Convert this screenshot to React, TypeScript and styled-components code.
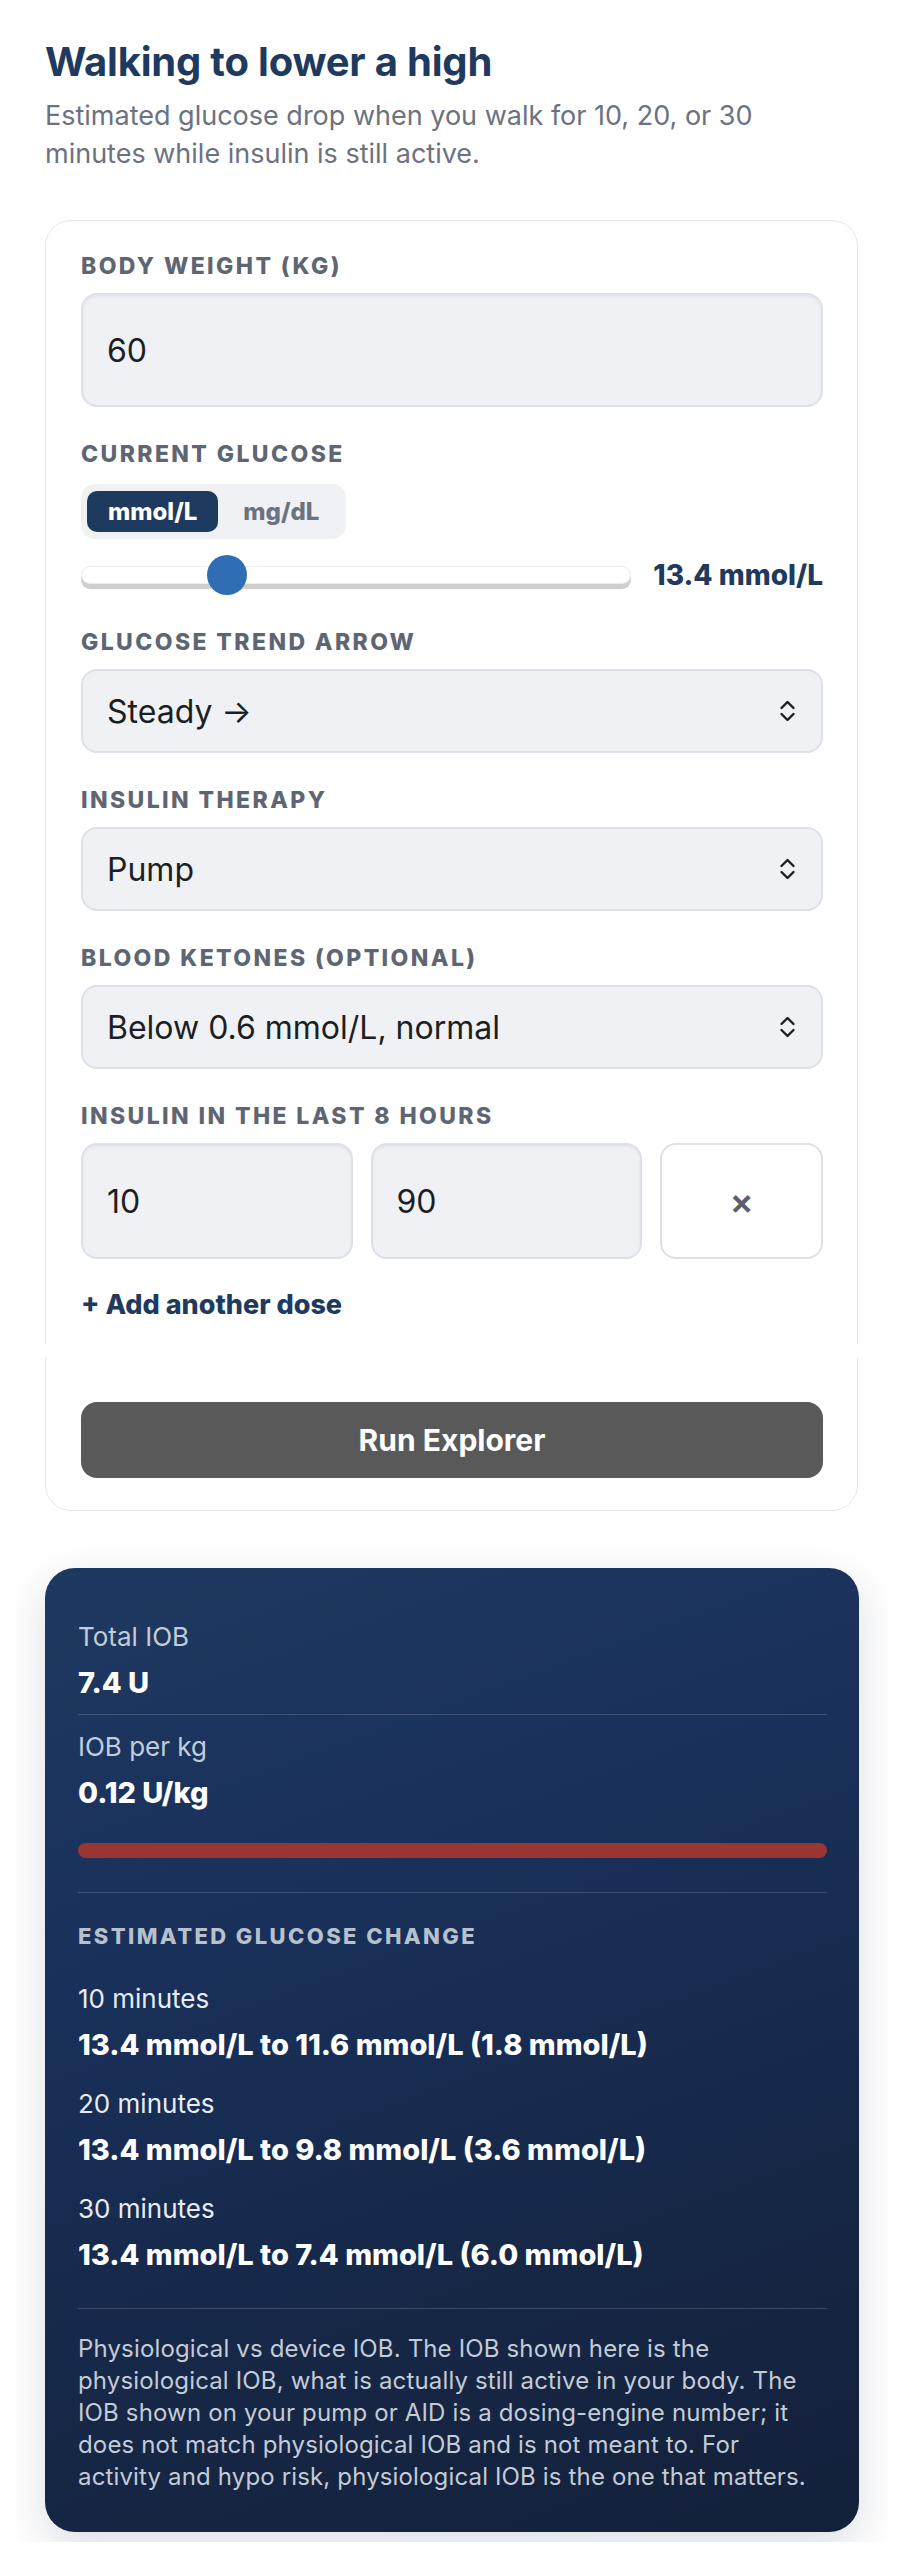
import { FC } from "react";
import styled, { createGlobalStyle } from "styled-components";

const GlobalStyle = createGlobalStyle`
  * {
    box-sizing: border-box;
  }
  body {
    margin: 0;
    background: #ffffff;
    font-family: "Inter", "Liberation Sans", sans-serif;
    -webkit-font-smoothing: antialiased;
  }
`;

const ChevronUpDown: FC = () => (
  <svg width="17" height="24" viewBox="0 0 17 24" fill="none">
    <path
      d="M2.5 9 L8.5 3 L14.5 9 M2.5 15 L8.5 21 L14.5 15"
      stroke="#1c1f24"
      strokeWidth="2.4"
      strokeLinecap="round"
      strokeLinejoin="round"
    />
  </svg>
);

interface SelectFieldProps {
  label: string;
  value: string;
  options: string[];
}

const SelectField: FC<SelectFieldProps> = ({ label, value, options }) => (
  <Field>
    <Label>{label}</Label>
    <SelectWrap>
      <Select defaultValue={value}>
        {options.map((o) => (
          <option key={o}>{o}</option>
        ))}
      </Select>
      <SelectIcon>
        <ChevronUpDown />
      </SelectIcon>
    </SelectWrap>
  </Field>
);

const results = [
  { minutes: "10 minutes", text: "13.4 mmol/L to 11.6 mmol/L (1.8 mmol/L)" },
  { minutes: "20 minutes", text: "13.4 mmol/L to 9.8 mmol/L (3.6 mmol/L)" },
  { minutes: "30 minutes", text: "13.4 mmol/L to 7.4 mmol/L (6.0 mmol/L)" },
];

const App: FC = () => {
  return (
    <>
      <GlobalStyle />
      <Page>
        <Title>Walking to lower a high</Title>
        <Subtitle>
          Estimated glucose drop when you walk for 10, 20, or 30 minutes while
          insulin is still active.
        </Subtitle>

        <Card>
          <Field>
            <Label>Body weight (kg)</Label>
            <TextInput type="text" defaultValue="60" $tall />
          </Field>

          <Field>
            <Label>Current glucose</Label>
            <Toggle>
              <ToggleOption $active>mmol/L</ToggleOption>
              <ToggleOption>mg/dL</ToggleOption>
            </Toggle>
            <SliderRow>
              <Range type="range" min={2} max={48.5} step={0.1} defaultValue={13.4} />
              <SliderValue>13.4 mmol/L</SliderValue>
            </SliderRow>
          </Field>

          <SelectField
            label="Glucose trend arrow"
            value="Steady →"
            options={["Rising fast ↑↑", "Rising ↗", "Steady →", "Falling ↘", "Falling fast ↓↓"]}
          />
          <SelectField
            label="Insulin therapy"
            value="Pump"
            options={["Pump", "Injections"]}
          />
          <SelectField
            label="Blood ketones (optional)"
            value="Below 0.6 mmol/L, normal"
            options={["Below 0.6 mmol/L, normal", "0.6 to 1.5 mmol/L", "Above 1.5 mmol/L"]}
          />

          <Field>
            <Label>Insulin in the last 8 hours</Label>
            <DoseRow>
              <TextInput type="text" defaultValue="10" />
              <TextInput type="text" defaultValue="90" />
              <RemoveButton aria-label="Remove dose">×</RemoveButton>
            </DoseRow>
          </Field>

          <AddDose>+ Add another dose</AddDose>

          <ActionBar>
            <RunButton>Run Explorer</RunButton>
          </ActionBar>
        </Card>

        <ResultSection>
          <ResultPanel>
            <MetricLabel>Total IOB</MetricLabel>
            <MetricValue>7.4 U</MetricValue>
            <Divider $top={16} $bottom={17} />
            <MetricLabel>IOB per kg</MetricLabel>
            <MetricValue>0.12 U/kg</MetricValue>
            <RiskBar />
            <Divider $top={34} $bottom={31} />
            <PanelHeading>Estimated glucose change</PanelHeading>
            <ChangeList>
              {results.map((r) => (
                <ChangeItem key={r.minutes}>
                  <MetricLabel $light>{r.minutes}</MetricLabel>
                  <MetricValue>{r.text}</MetricValue>
                </ChangeItem>
              ))}
            </ChangeList>
            <Divider $top={38} $bottom={24} />
            <Note>
              Physiological vs device IOB. The IOB shown here is the
              physiological IOB, what is actually still active in your body. The
              IOB shown on your pump or AID is a dosing-engine number; it does
              not match physiological IOB and is not meant to. For activity and
              hypo risk, physiological IOB is the one that matters.
            </Note>
          </ResultPanel>
        </ResultSection>
      </Page>
    </>
  );
};

const Page = styled.main`
  width: 813px;
  margin-left: 45px;
  padding-top: 40px;
  padding-bottom: 17px;
`;

const Title = styled.h1`
  margin: 0;
  font-size: 40px;
  line-height: 43px;
  font-weight: 700;
  color: #1f3a5f;
  letter-spacing: -0.2px;
`;

const Subtitle = styled.p`
  margin: 14px 0 0;
  font-size: 27px;
  line-height: 38px;
  color: #6b7280;
`;

const Card = styled.section`
  margin-top: 47px;
  background: #ffffff;
  border: 1px solid #e4e7eb;
  border-radius: 26px;
  padding: 33px 34px 32px 35px;
  display: flex;
  flex-direction: column;
  gap: 35px;
`;

const Field = styled.div`
  display: flex;
  flex-direction: column;
  gap: 15px;
`;

const Label = styled.label`
  font-size: 23px;
  line-height: 24px;
  font-weight: 800;
  letter-spacing: 2.4px;
  text-transform: uppercase;
  color: #5f6673;
`;

const TextInput = styled.input<{ $tall?: boolean }>`
  width: 100%;
  height: ${({ $tall }) => ($tall ? "114px" : "116px")};
  padding: 0 24px;
  background: #eff1f5;
  border: 2px solid #dde1e7;
  border-radius: 16px;
  box-shadow: inset 0 2px 3px rgba(15, 23, 42, 0.05);
  font-family: inherit;
  font-size: 32px;
  color: #1b1f24;
  outline: none;
`;

const Toggle = styled.div`
  display: inline-flex;
  align-self: flex-start;
  gap: 4px;
  margin-top: 3px;
  padding: 7px 6px;
  background: #eff1f5;
  border-radius: 14px;
`;

const ToggleOption = styled.button<{ $active?: boolean }>`
  height: 41px;
  padding: 0 21px;
  border: none;
  border-radius: 10px;
  background: ${({ $active }) => ($active ? "#1f3a5f" : "transparent")};
  color: ${({ $active }) => ($active ? "#ffffff" : "#6b7280")};
  font-family: inherit;
  font-size: 24px;
  font-weight: 800;
  cursor: pointer;
`;

const SliderRow = styled.div`
  display: flex;
  align-items: center;
  gap: 22px;
  margin-top: 1px;
  height: 40px;
`;

const Range = styled.input`
  flex: 1;
  min-width: 0;
  height: 40px;
  margin: 0;
  background: transparent;
  -webkit-appearance: none;
  appearance: none;

  &::-webkit-slider-runnable-track {
    height: 18px;
    background: #ffffff;
    border: 1px solid #ececec;
    border-radius: 9px;
    box-shadow: 0 5px 0 #cfcfcf;
  }

  &::-webkit-slider-thumb {
    -webkit-appearance: none;
    width: 40px;
    height: 40px;
    margin-top: -12px;
    border-radius: 50%;
    background: #2f6db4;
    border: none;
  }
`;

const SliderValue = styled.span`
  font-size: 28px;
  font-weight: 800;
  color: #1f3a5f;
  white-space: nowrap;
`;

const SelectWrap = styled.div`
  position: relative;
`;

const Select = styled.select`
  width: 100%;
  height: 84px;
  padding: 0 60px 0 24px;
  background: #eff1f5;
  border: 2px solid #dde1e7;
  border-radius: 16px;
  font-family: inherit;
  font-size: 32px;
  color: #1b1f24;
  -webkit-appearance: none;
  appearance: none;
  outline: none;
`;

const SelectIcon = styled.span`
  position: absolute;
  right: 27px;
  top: 50%;
  transform: translateY(-50%);
  display: flex;
  pointer-events: none;
`;

const DoseRow = styled.div`
  display: grid;
  grid-template-columns: 1fr 1fr 163px;
  gap: 18px;
`;

const RemoveButton = styled.button`
  height: 116px;
  background: #ffffff;
  border: 2px solid #dde1e7;
  border-radius: 16px;
  font-family: inherit;
  font-size: 36px;
  font-weight: 600;
  color: #59606b;
  cursor: pointer;
`;

const AddDose = styled.button`
  align-self: flex-start;
  margin-top: -5px;
  padding: 0;
  border: none;
  background: none;
  font-family: inherit;
  font-size: 27px;
  line-height: 31px;
  font-weight: 800;
  color: #1f3a5f;
  cursor: pointer;
`;

const ActionBar = styled.div`
  position: relative;
  margin-top: -11px;
  padding-top: 58px;

  &::before {
    content: "";
    position: absolute;
    top: 0;
    left: -40px;
    right: -40px;
    height: 13px;
    background: #ffffff;
  }
`;

const RunButton = styled.button`
  width: 100%;
  height: 76px;
  border: none;
  border-radius: 16px;
  background: #595959;
  color: #ffffff;
  font-family: inherit;
  font-size: 30px;
  font-weight: 700;
  cursor: pointer;
`;

const ResultSection = styled.div`
  margin: 17px -30px 0 -29px;
  padding: 40px 29px 10px 29px;
  overflow: hidden;
`;

const ResultPanel = styled.section`
  border-radius: 30px;
  padding: 54px 32px 39px 33px;
  background: linear-gradient(160deg, #1e3961 0%, #19305a 35%, #162746 70%, #132039 100%);
  box-shadow: 0 14px 44px rgba(30, 41, 70, 0.16);
  color: #ffffff;
`;

const MetricLabel = styled.div<{ $light?: boolean }>`
  font-size: 26px;
  line-height: 29px;
  color: ${({ $light }) => ($light ? "#e8ecf2" : "#c3ccd9")};
`;

const MetricValue = styled.div`
  margin-top: 16px;
  font-size: 29px;
  line-height: 31px;
  font-weight: 800;
  color: #ffffff;
`;

const Divider = styled.hr<{ $top: number; $bottom: number }>`
  margin: ${({ $top, $bottom }) => `${$top}px 0 ${$bottom}px`};
  border: none;
  height: 1px;
  background: rgba(255, 255, 255, 0.16);
`;

const RiskBar = styled.div`
  margin-top: 35px;
  height: 15px;
  border-radius: 8px;
  background: #9a3631;
`;

const PanelHeading = styled.h3`
  margin: 0;
  font-size: 22px;
  line-height: 24px;
  font-weight: 800;
  letter-spacing: 2.4px;
  text-transform: uppercase;
  color: #b7c0cd;
`;

const ChangeList = styled.div`
  display: flex;
  flex-direction: column;
  gap: 29px;
  margin-top: 36px;
`;

const ChangeItem = styled.div`
  display: flex;
  flex-direction: column;
`;

const Note = styled.p`
  margin: 0;
  font-size: 24px;
  line-height: 32px;
  letter-spacing: 0.15px;
  color: #c3cbd6;
`;

export default App;
